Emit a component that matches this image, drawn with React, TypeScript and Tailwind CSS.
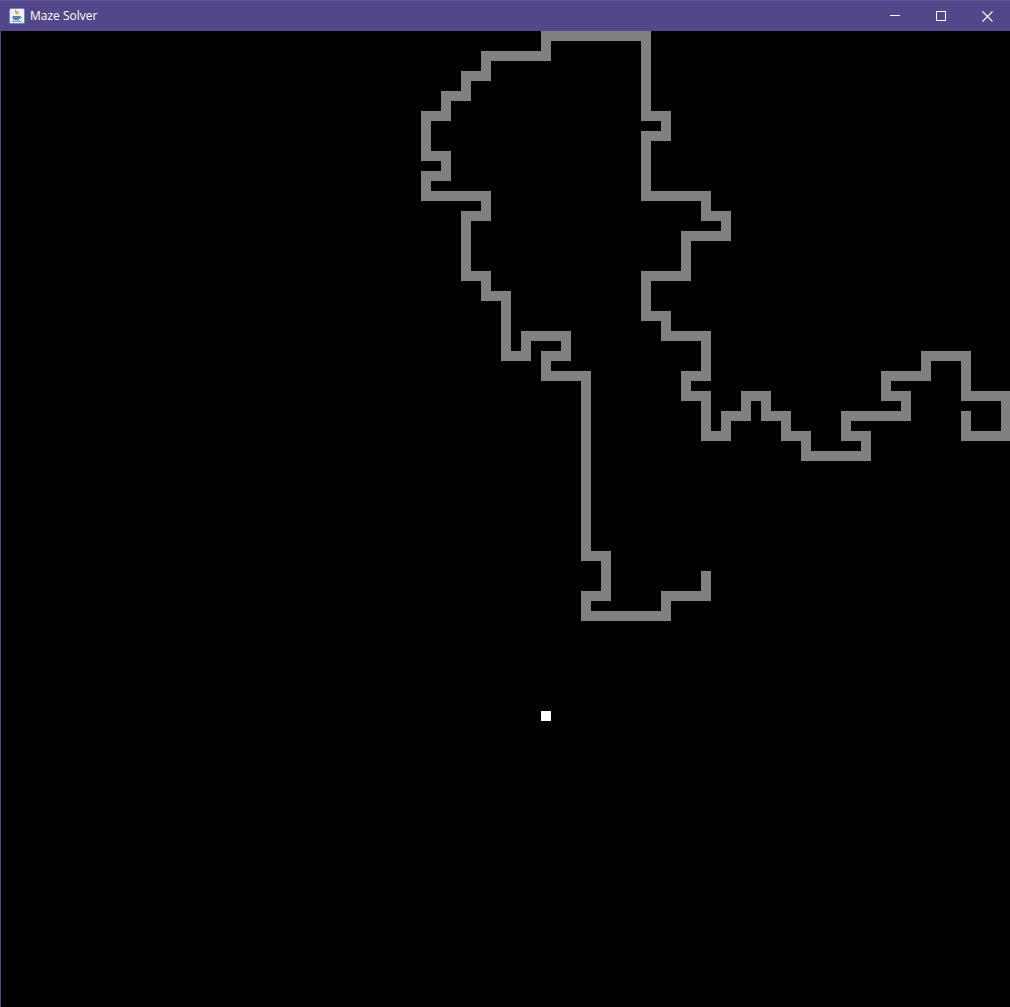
import React from "react";

const PATH: [number, number][] = [
  [35, 27], [35, 28], [33, 28], [33, 29], [29, 29], [29, 28], [30, 28], [30, 26], [29, 26],
  [29, 17], [27, 17], [27, 16], [28, 16], [28, 15], [26, 15], [26, 16], [25, 16], [25, 13],
  [24, 13], [24, 12], [23, 12], [23, 9], [24, 9], [24, 8], [21, 8], [21, 7], [22, 7], [22, 6],
  [21, 6], [21, 4], [22, 4], [22, 3], [23, 3], [23, 2], [24, 2], [24, 1], [27, 1], [27, 0],
  [32, 0], [32, 4], [33, 4], [33, 5], [32, 5], [32, 8], [35, 8], [35, 9], [36, 9], [36, 10],
  [34, 10], [34, 12], [32, 12], [32, 14], [33, 14], [33, 15], [35, 15], [35, 17], [34, 17],
  [34, 18], [35, 18], [35, 20], [36, 20], [36, 19], [37, 19], [37, 18], [38, 18], [38, 19],
  [39, 19], [39, 20], [40, 20], [40, 21], [43, 21], [43, 20], [42, 20], [42, 19], [45, 19],
  [45, 18], [44, 18], [44, 17], [46, 17], [46, 16], [48, 16], [48, 18], [50, 18], [50, 20],
  [48, 20], [48, 19],
];

const points = PATH.map(([i, j]) => `${i * 20 + 5},${j * 20 + 5}`).join(" ");

function JavaIcon() {
  return (
    <svg width="16" height="16" viewBox="0 0 16 16">
      <rect x="0.5" y="0.5" width="15" height="15" rx="1.5" fill="#eef2f7" stroke="#6d8fb8" />
      <path d="M7 2 C5.5 3.5 8.5 4.5 7 6" stroke="#e2761b" strokeWidth="1.2" fill="none" />
      <path d="M9 3 C8 4 9.5 5 8.5 6" stroke="#e2761b" strokeWidth="1" fill="none" />
      <path d="M3.5 8 H11 V10 C11 11.5 9.5 12 7.5 12 C5 12 3.5 11.5 3.5 10 Z" fill="#5b7fb0" />
      <path d="M11 8.5 C13 8.5 13 10.5 11 10.5" stroke="#5b7fb0" strokeWidth="1" fill="none" />
      <path d="M3 13.2 H12.5" stroke="#5b7fb0" strokeWidth="1" />
    </svg>
  );
}

export default function App() {
  return (
    <div className="w-[1010px] h-[1007px] flex flex-col overflow-hidden bg-black">
      <div className="h-[31px] shrink-0 flex items-center bg-[#544789] border-t border-[#5e5293] text-white">
        <div className="ml-[9px] mt-[-1px] flex items-center">
          <JavaIcon />
        </div>
        <span
          className="ml-[5px] text-[12px] leading-none mt-[-1px]"
          style={{ fontFamily: '"Open Sans", "Noto Sans", sans-serif' }}
        >
          Maze Solver
        </span>
        <div className="ml-auto flex items-center h-full">
          <div className="w-[46px] h-full flex items-center justify-center">
            <svg width="10" height="10" viewBox="0 0 10 10">
              <path d="M0 4.5 H10" stroke="white" strokeWidth="1" />
            </svg>
          </div>
          <div className="w-[46px] h-full flex items-center justify-center">
            <svg width="10" height="10" viewBox="0 0 10 10">
              <rect x="0.5" y="0.5" width="9" height="9" fill="none" stroke="white" strokeWidth="1" />
            </svg>
          </div>
          <div className="w-[46px] h-full flex items-center justify-center">
            <svg width="11" height="11" viewBox="0 0 11 11">
              <path d="M0.5 0.5 L10.5 10.5 M10.5 0.5 L0.5 10.5" stroke="white" strokeWidth="1.1" />
            </svg>
          </div>
        </div>
      </div>
      <div className="flex-1 flex">
        <div className="w-px bg-[#544789]" />
        <div className="flex-1 relative bg-black">
          <svg width="1009" height="976" viewBox="0 0 1009 976" className="block">
            <polyline
              points={points}
              fill="none"
              stroke="#808080"
              strokeWidth="10"
              strokeLinecap="square"
              strokeLinejoin="miter"
            />
            <rect x="540" y="680" width="10" height="10" fill="#ffffff" />
          </svg>
        </div>
      </div>
    </div>
  );
}
